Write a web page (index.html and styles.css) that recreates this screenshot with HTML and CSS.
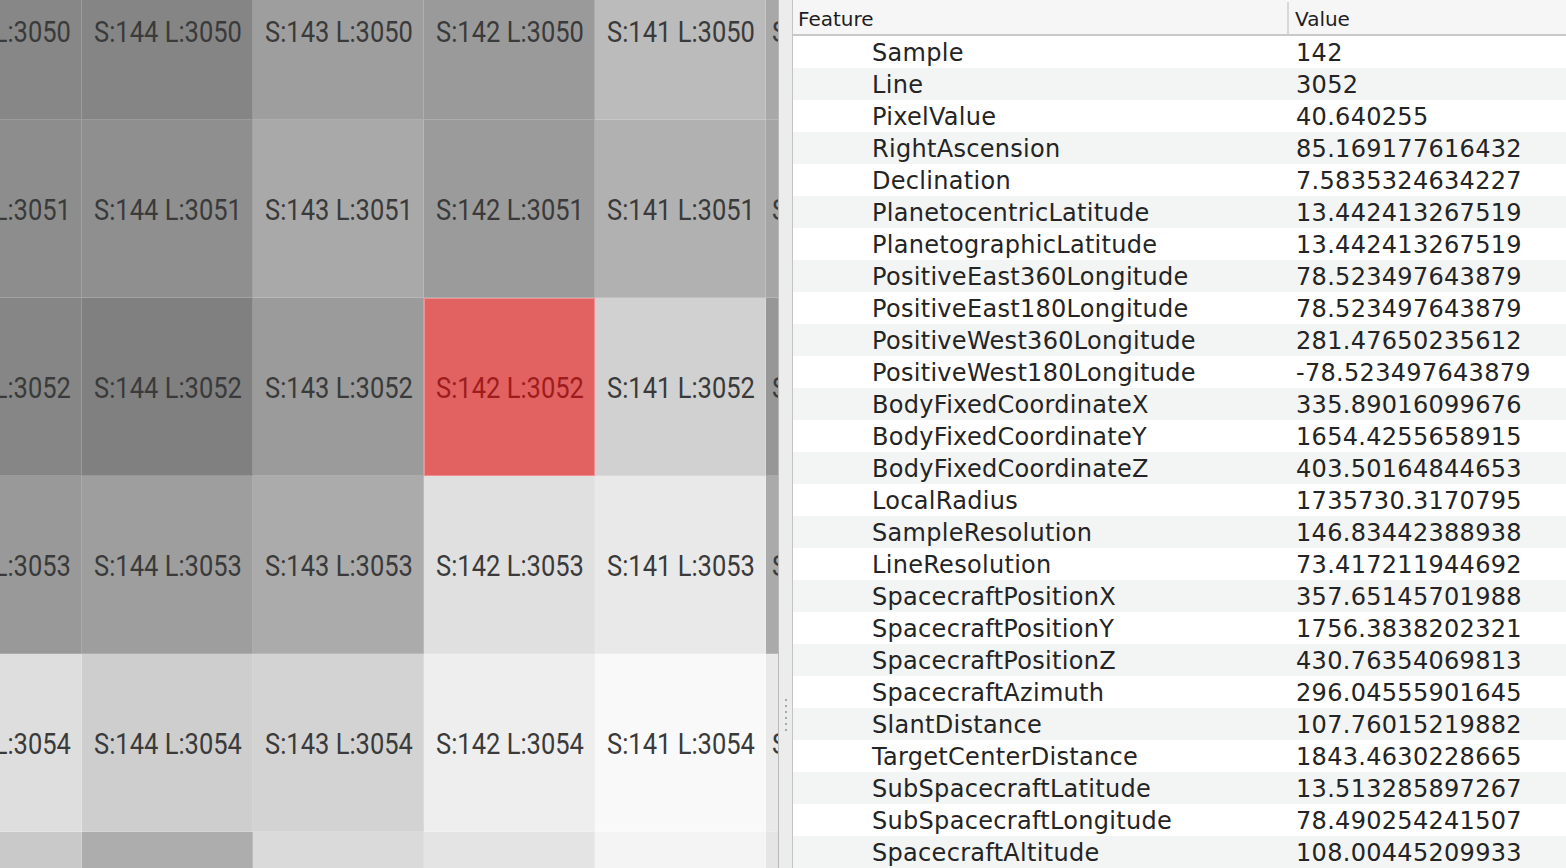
FILE: index.html
```html
<!DOCTYPE html>
<html>
<head>
<meta charset="utf-8">
<link rel="stylesheet" href="styles.css">
</head>
<body>
<div class="app">
  <div class="viewer">
    <div class="grid">
      <div class="cell" style="background:#878787"><span>S:145 L:3050</span></div>
      <div class="cell" style="background:#858585"><span>S:144 L:3050</span></div>
      <div class="cell" style="background:#9e9e9e"><span>S:143 L:3050</span></div>
      <div class="cell" style="background:#9a9a9a"><span>S:142 L:3050</span></div>
      <div class="cell" style="background:#bbbbbb"><span>S:141 L:3050</span></div>
      <div class="cell edge" style="background:#a8a8a8"><span>S:140 L:3050</span></div>

      <div class="cell" style="background:#8d8d8d"><span>S:145 L:3051</span></div>
      <div class="cell" style="background:#8f8f8f"><span>S:144 L:3051</span></div>
      <div class="cell" style="background:#a9a9a9"><span>S:143 L:3051</span></div>
      <div class="cell" style="background:#9b9b9b"><span>S:142 L:3051</span></div>
      <div class="cell" style="background:#b1b1b1"><span>S:141 L:3051</span></div>
      <div class="cell edge" style="background:#a5a5a5"><span>S:140 L:3051</span></div>

      <div class="cell" style="background:#868686"><span>S:145 L:3052</span></div>
      <div class="cell" style="background:#808080"><span>S:144 L:3052</span></div>
      <div class="cell" style="background:#9b9b9b"><span>S:143 L:3052</span></div>
      <div class="cell selected"><span>S:142 L:3052</span></div>
      <div class="cell" style="background:#d1d1d1"><span>S:141 L:3052</span></div>
      <div class="cell edge" style="background:#979797"><span>S:140 L:3052</span></div>

      <div class="cell" style="background:#999999"><span>S:145 L:3053</span></div>
      <div class="cell" style="background:#9e9e9e"><span>S:144 L:3053</span></div>
      <div class="cell" style="background:#ababab"><span>S:143 L:3053</span></div>
      <div class="cell" style="background:#e0e0e0"><span>S:142 L:3053</span></div>
      <div class="cell" style="background:#e9e9e9"><span>S:141 L:3053</span></div>
      <div class="cell edge" style="background:#aaaaaa"><span>S:140 L:3053</span></div>

      <div class="cell" style="background:#dedede"><span>S:145 L:3054</span></div>
      <div class="cell" style="background:#cecece"><span>S:144 L:3054</span></div>
      <div class="cell" style="background:#d3d3d3"><span>S:143 L:3054</span></div>
      <div class="cell" style="background:#eeeeee"><span>S:142 L:3054</span></div>
      <div class="cell" style="background:#f9f9f9"><span>S:141 L:3054</span></div>
      <div class="cell edge" style="background:#e9e9e9"><span>S:140 L:3054</span></div>

      <div class="cell" style="background:#c9c9c9"><span>S:145 L:3055</span></div>
      <div class="cell" style="background:#adadad"><span>S:144 L:3055</span></div>
      <div class="cell" style="background:#dadada"><span>S:143 L:3055</span></div>
      <div class="cell" style="background:#e4e4e4"><span>S:142 L:3055</span></div>
      <div class="cell" style="background:#f4f4f4"><span>S:141 L:3055</span></div>
      <div class="cell edge" style="background:#e5e5e5"><span>S:140 L:3055</span></div>
    </div>
  </div>

  <div class="splitter">
    <div class="grip">
      <i></i><i></i><i></i><i></i><i></i><i></i>
    </div>
  </div>

  <div class="panel">
    <div class="thead">
      <div class="th th-feature">Feature</div>
      <div class="th th-value">Value</div>
    </div>
    <div class="tbody">
      <div class="tr"><div class="td feat">Sample</div><div class="td val">142</div></div>
      <div class="tr"><div class="td feat">Line</div><div class="td val">3052</div></div>
      <div class="tr"><div class="td feat">PixelValue</div><div class="td val">40.640255</div></div>
      <div class="tr"><div class="td feat">RightAscension</div><div class="td val">85.169177616432</div></div>
      <div class="tr"><div class="td feat">Declination</div><div class="td val">7.5835324634227</div></div>
      <div class="tr"><div class="td feat">PlanetocentricLatitude</div><div class="td val">13.442413267519</div></div>
      <div class="tr"><div class="td feat">PlanetographicLatitude</div><div class="td val">13.442413267519</div></div>
      <div class="tr"><div class="td feat">PositiveEast360Longitude</div><div class="td val">78.523497643879</div></div>
      <div class="tr"><div class="td feat">PositiveEast180Longitude</div><div class="td val">78.523497643879</div></div>
      <div class="tr"><div class="td feat">PositiveWest360Longitude</div><div class="td val">281.47650235612</div></div>
      <div class="tr"><div class="td feat">PositiveWest180Longitude</div><div class="td val">-78.523497643879</div></div>
      <div class="tr"><div class="td feat">BodyFixedCoordinateX</div><div class="td val">335.89016099676</div></div>
      <div class="tr"><div class="td feat">BodyFixedCoordinateY</div><div class="td val">1654.4255658915</div></div>
      <div class="tr"><div class="td feat">BodyFixedCoordinateZ</div><div class="td val">403.50164844653</div></div>
      <div class="tr"><div class="td feat">LocalRadius</div><div class="td val">1735730.3170795</div></div>
      <div class="tr"><div class="td feat">SampleResolution</div><div class="td val">146.83442388938</div></div>
      <div class="tr"><div class="td feat">LineResolution</div><div class="td val">73.417211944692</div></div>
      <div class="tr"><div class="td feat">SpacecraftPositionX</div><div class="td val">357.65145701988</div></div>
      <div class="tr"><div class="td feat">SpacecraftPositionY</div><div class="td val">1756.3838202321</div></div>
      <div class="tr"><div class="td feat">SpacecraftPositionZ</div><div class="td val">430.76354069813</div></div>
      <div class="tr"><div class="td feat">SpacecraftAzimuth</div><div class="td val">296.04555901645</div></div>
      <div class="tr"><div class="td feat">SlantDistance</div><div class="td val">107.76015219882</div></div>
      <div class="tr"><div class="td feat">TargetCenterDistance</div><div class="td val">1843.4630228665</div></div>
      <div class="tr"><div class="td feat">SubSpacecraftLatitude</div><div class="td val">13.513285897267</div></div>
      <div class="tr"><div class="td feat">SubSpacecraftLongitude</div><div class="td val">78.490254241507</div></div>
      <div class="tr"><div class="td feat">SpacecraftAltitude</div><div class="td val">108.00445209933</div></div>
    </div>
  </div>
</div>
</body>
</html>
```

FILE: styles.css
```css
html, body {
  margin: 0;
  padding: 0;
  width: 1566px;
  height: 868px;
  overflow: hidden;
  background: #ffffff;
}

.app {
  display: flex;
  width: 1566px;
  height: 868px;
}

/* ---------- left pixel viewer ---------- */
.viewer {
  width: 778px;
  height: 868px;
  overflow: hidden;
  flex: none;
  background: #d8d8d8;
}

.grid {
  display: grid;
  grid-template-columns: repeat(6, 171px);
  grid-auto-rows: 178px;
  margin-left: -89px;
  margin-top: -58px;
  width: 1026px;
}

.cell {
  display: flex;
  align-items: center;
  justify-content: center;
  box-shadow: inset -1px -1px 0 rgba(255, 255, 255, 0.18);
  overflow: hidden;
  font-family: Roboto, "Liberation Sans", sans-serif;
  font-size: 30px;
  color: #3a3a3a;
}

.cell span {
  display: inline-block;
  white-space: nowrap;
  transform: scaleX(0.85);
}

.cell.edge {
  justify-content: flex-start;
}

.cell.edge span {
  transform-origin: left center;
  margin-left: 6px;
}

.cell.selected {
  background: #e26262;
  color: #9e1c1c;
  box-shadow: inset 0 0 0 1px rgba(255, 200, 200, 0.45);
}

/* ---------- splitter ---------- */
.splitter {
  width: 13px;
  flex: none;
  background: #ececec;
  border-left: 1px solid #b9b9b9;
  border-right: 1px solid #c4c4c4;
  display: flex;
  align-items: flex-start;
  justify-content: center;
}

.grip {
  margin-top: 699px;
  display: flex;
  flex-direction: column;
  gap: 4px;
}

.grip i {
  display: block;
  width: 2px;
  height: 2px;
  background: #a8a8a8;
}

/* ---------- right table ---------- */
.panel {
  flex: 1;
  min-width: 0;
  background: #ffffff;
  font-family: "DejaVu Sans", "Liberation Sans", sans-serif;
  color: #242424;
}

.thead {
  display: flex;
  height: 34px;
  background: #f6f6f6;
  border-bottom: 2px solid #c9c9c9;
}

.th {
  font-size: 20px;
  line-height: 30px;
  padding-top: 4px;
  color: #1e1e1e;
  padding-left: 5px;
}

.th-feature {
  width: 489px;
  border-right: 2px solid #d8d8d8;
  margin-top: 2px;
  padding-top: 2px;
}

.th-value {
  flex: 1;
  padding-left: 6px;
}

.tr {
  display: flex;
  height: 32px;
}

.tr:nth-child(even) {
  background: #f3f4f4;
}

.td {
  font-size: 24px;
  line-height: 32px;
  padding-top: 1px;
  height: 31px;
  letter-spacing: 0.3px;
  white-space: nowrap;
}

.feat {
  width: 416px;
  padding-left: 79px;
}

.val {
  flex: 1;
  padding-left: 8px;
}
```
